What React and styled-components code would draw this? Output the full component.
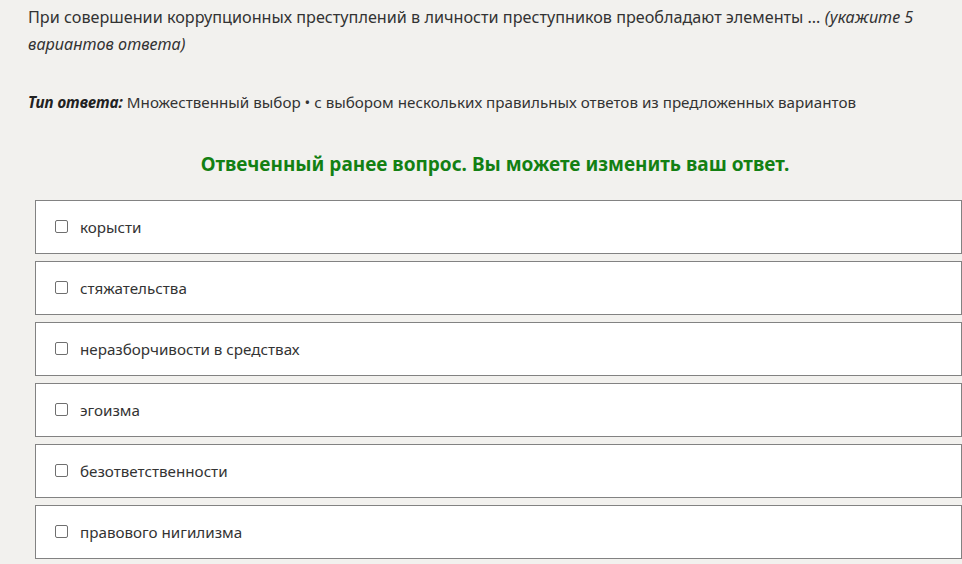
import React from "react";
import styled, { createGlobalStyle } from "styled-components";

const GlobalStyle = createGlobalStyle`
  html, body {
    margin: 0;
    padding: 0;
    background: #f2f1ee;
    overflow: hidden;
  }
  body {
    font-family: "Noto Sans", "Open Sans", "Liberation Sans", sans-serif;
    color: #333;
  }
`;

const Page = styled.div`
  padding: 4px 0 0 28px;
  width: 962px;
  box-sizing: border-box;
`;

const QuestionText = styled.p`
  margin: 0;
  padding-right: 20px;
  font-size: 16.2px;
  line-height: 27px;
  color: #333;
`;

const Hint = styled.em`
  font-style: italic;
`;

const AnswerType = styled.p`
  margin: 34px 0 0 0;
  font-size: 15.2px;
  line-height: 20px;
  color: #333;

  b {
    font-style: italic;
    font-weight: 700;
    color: #222;
  }
`;

const Notice = styled.h3`
  margin: 40px 0 0 0;
  text-align: center;
  font-size: 19px;
  font-weight: 700;
  line-height: 24px;
  color: #138013;
`;

const Options = styled.div`
  margin: 24px 0 0 7px;
  display: flex;
  flex-direction: column;
  gap: 7px;
`;

const Option = styled.label`
  display: flex;
  align-items: center;
  gap: 12px;
  height: 54px;
  box-sizing: border-box;
  padding-left: 19px;
  background: #fff;
  border: 1px solid #828282;
  font-size: 15.2px;
  color: #333;
  cursor: pointer;
`;

const Box = styled.span`
  width: 11px;
  height: 11px;
  border: 1px solid #6f6f6f;
  border-radius: 2px;
  background: #fff;
  flex-shrink: 0;
  margin-top: -1px;
`;

const answers = [
  "корысти",
  "стяжательства",
  "неразборчивости в средствах",
  "эгоизма",
  "безответственности",
  "правового нигилизма",
];

export default function App() {
  return (
    <Page>
      <GlobalStyle />
      <QuestionText>
        При совершении коррупционных преступлений в личности преступников
        преобладают элементы … <Hint>(укажите 5 вариантов ответа)</Hint>
      </QuestionText>
      <AnswerType>
        <b>Тип ответа:</b> Множественный выбор • с выбором нескольких
        правильных ответов из предложенных вариантов
      </AnswerType>
      <Notice>Отвеченный ранее вопрос. Вы можете изменить ваш ответ.</Notice>
      <Options>
        {answers.map((a) => (
          <Option key={a}>
            <Box />
            {a}
          </Option>
        ))}
      </Options>
    </Page>
  );
}
